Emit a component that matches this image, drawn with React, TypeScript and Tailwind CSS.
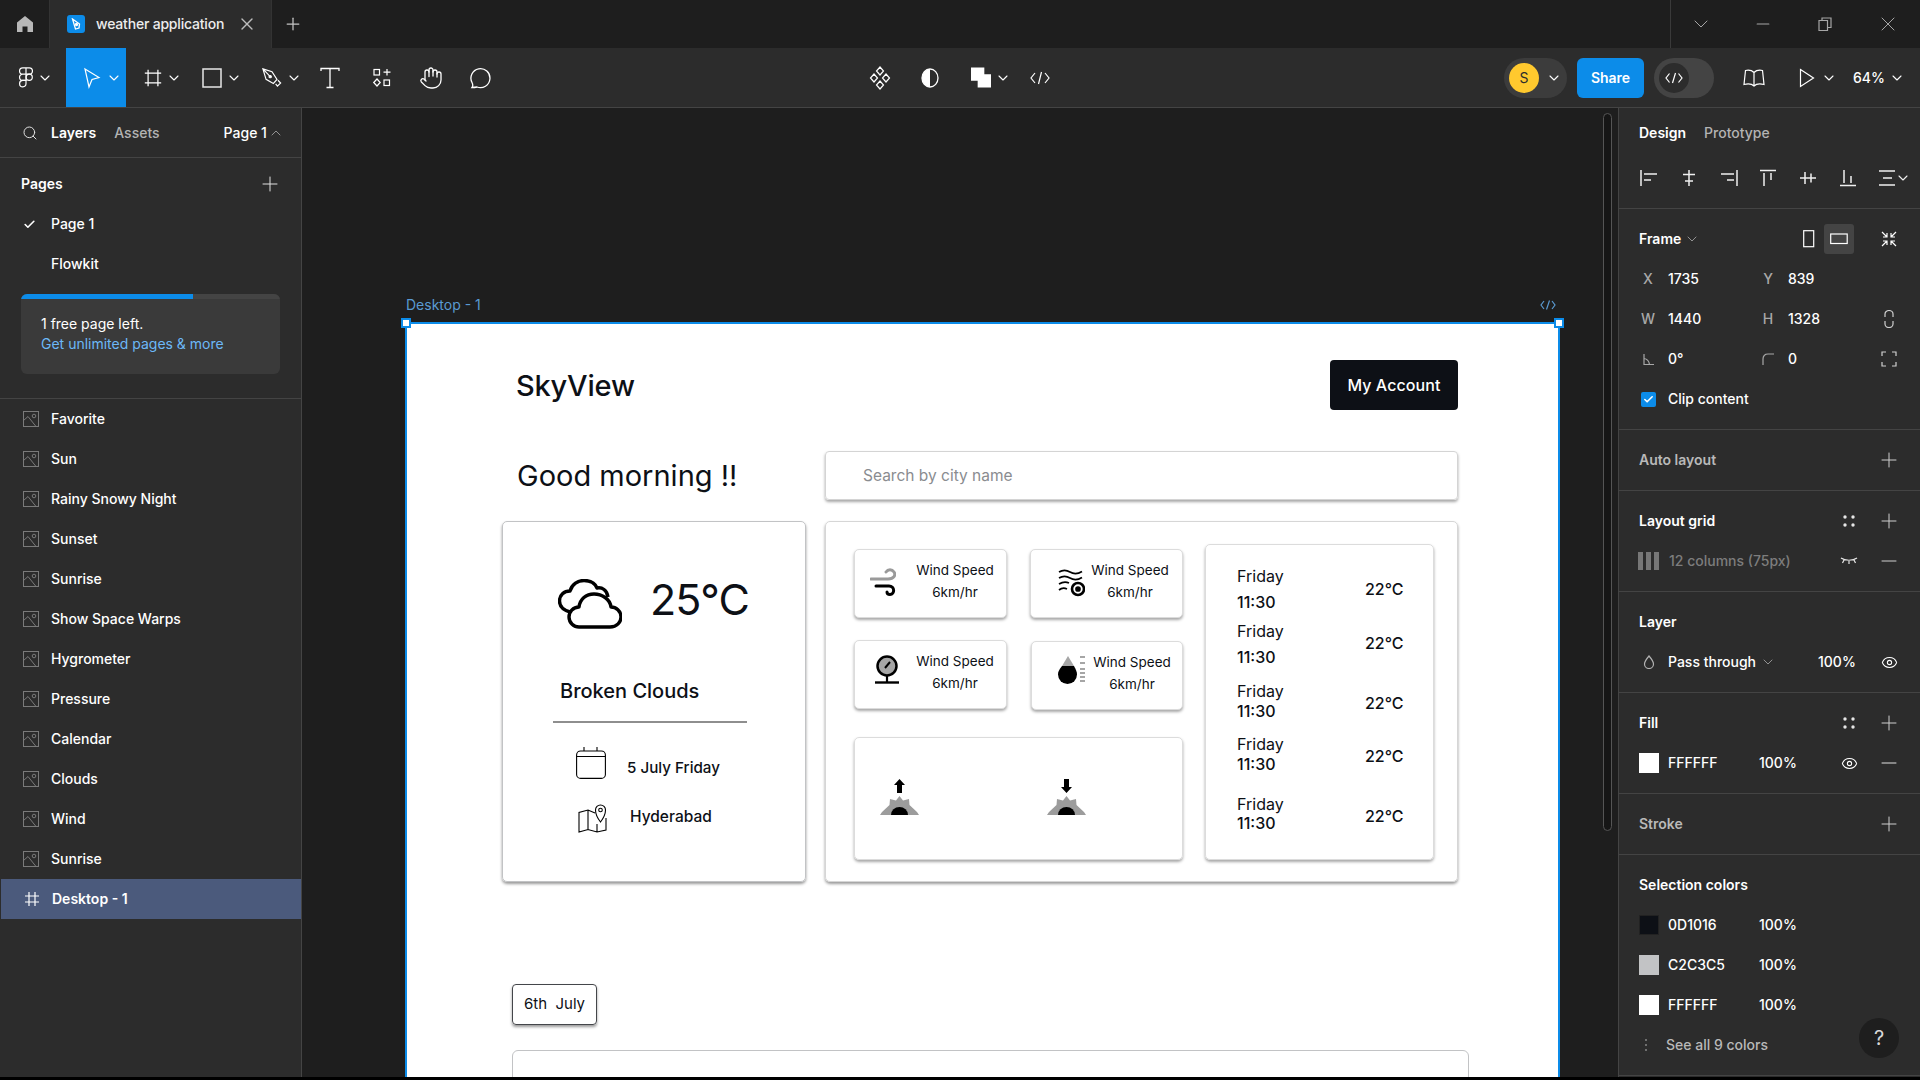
import { Check, ChevronDown, ChevronUp, Eye, Hand, Minus, Plus, Search, X } from "lucide-react";
import type { ReactNode } from "react";

const layers = [
  "Favorite",
  "Sun",
  "Rainy Snowy Night",
  "Sunset",
  "Sunrise",
  "Show Space Warps",
  "Hygrometer",
  "Pressure",
  "Calendar",
  "Clouds",
  "Wind",
  "Sunrise",
];

// every row in the forecast list sits a little differently in the design file
const forecast = [
  { top: "mt-[21px]", gap: "mt-[6px]", temp: "mb-[1px]" },
  { top: "mt-[9px]", gap: "mt-[6px]", temp: "mb-[2px]" },
  { top: "mt-[14px]", gap: "mt-0", temp: "mt-[4px]" },
  { top: "mt-[13px]", gap: "mt-0", temp: "mt-[4px]" },
  { top: "mt-[20px]", gap: "-mt-px", temp: "mt-[4px]" },
];

function Svg({ w = 20, h = 20, className = "", children }: { w?: number; h?: number; className?: string; children: ReactNode }) {
  return (
    <svg width={w} height={h} viewBox={`0 0 ${w} ${h}`} fill="none" stroke="currentColor" strokeWidth="1.2" className={className}>
      {children}
    </svg>
  );
}

function Chev({ className = "" }: { className?: string }) {
  return <ChevronDown size={16} strokeWidth={1.6} className={`-mx-0.5 shrink-0 ${className}`} />;
}

function Tool({ active, className = "", children }: { active?: boolean; className?: string; children: ReactNode }) {
  return (
    <div className={`flex h-[59px] w-[60px] items-center gap-[6px] pl-4 text-white ${active ? "bg-[#0c8ce9]" : ""} ${className}`}>
      <div className="flex w-5 justify-center">{children}</div>
      <Chev />
    </div>
  );
}

function TitleBar() {
  return (
    <div className="flex h-12 items-center bg-[#1e1e1e] text-[#c4c4c4]">
      <div className="flex h-12 w-[50px] items-center justify-center border-r border-[#333]">
        <svg width="16" height="16" viewBox="0 0 16 16" fill="#b8b8b8">
          <path d="M8 0 16 6.5V16H10.5V10.5H5.5V16H0V6.5Z" />
        </svg>
      </div>
      <div className="flex h-12 w-[222px] items-center border-r border-[#333] bg-[#2c2c2c] pl-[17px]">
        <div className="flex h-[18px] w-[18px] items-center justify-center rounded-[3px] bg-[#0c8ce9]">
          <svg width="10" height="12" viewBox="0 0 10 12" fill="none" stroke="#fff" strokeWidth="1.3">
            <path d="M1.5 1 8.5 6 8 10 4.5 11 1.5 1Z" />
            <circle cx="5.5" cy="6.5" r="1" fill="#fff" />
          </svg>
        </div>
        <span className="ml-[11px] w-[141px] text-sm font-medium tracking-[-0.2px] whitespace-nowrap text-[#ececec]">weather application</span>
        <X size={20} strokeWidth={1.6} className="text-[#bdbdbd]" />
      </div>
      <Plus size={20} strokeWidth={1.5} className="ml-[11px] text-[#c4c4c4]" />
      <div className="ml-[1367px] flex h-12 flex-1 items-center border-l border-[#3a3a3a] text-[#a6a6a6]">
        <ChevronDown size={24} strokeWidth={1} className="ml-[18px]" />
        <Minus size={20} strokeWidth={1.4} className="ml-[40px]" />
        <Svg w={14} h={14} className="ml-[45px]">
          <path d="M1 3.5H9.5V13.5H1ZM4 3.5V1H13V10.5H9.5" />
        </Svg>
        <X size={24} strokeWidth={1} className="ml-[44px]" />
      </div>
    </div>
  );
}

function Toolbar() {
  return (
    <div className="flex h-[60px] items-start border-b border-[#444] bg-[#2c2c2c] text-white">
      <div className="flex h-[59px] w-[66px] items-center gap-[3px] pl-4">
        <div className="flex w-5 justify-center">
          <svg width="14" height="21" viewBox="0 0 14 21" fill="none" stroke="#fff" strokeWidth="1.2">
            <path d="M7 .8H3.7a3.1 3.1 0 0 0 0 6.3H7ZM7 .8h3.3a3.1 3.1 0 0 1 0 6.3H7ZM7 7.1H3.7a3.1 3.1 0 0 0 0 6.3H7Z" />
            <circle cx="10.2" cy="10.3" r="3.1" />
            <path d="M7 13.4H3.7a3.2 3.2 0 1 0 3.3 3.2Z" />
          </svg>
        </div>
        <Chev />
      </div>
      <Tool active>
        <svg width="18" height="22" viewBox="0 0 18 22" fill="none" stroke="#fff" strokeWidth="1.2">
          <path d="M2 2 16 10.5 9 12.5 6 20Z" />
        </svg>
      </Tool>
      <Tool>
        <Svg w={22} h={22} className="ml-[2px]">
          <path d="M5 1V21M17 1V21M1 5H21M1 17H21" strokeWidth="1.5" />
        </Svg>
      </Tool>
      <Tool>
        <Svg w={20} h={20}>
          <rect x="1" y="1" width="18" height="18" strokeWidth="1.5" stroke="#e6e6e6" />
        </Svg>
      </Tool>
      <Tool>
        <Svg w={22} h={22}>
          <path d="M1 1 11 4 16.5 12.5 12.5 17 4.5 12.5ZM1 1 8.5 9M15 17.5 17 20 20.5 16.5 17.5 13.5" strokeWidth="1.3" />
          <circle cx="9" cy="9.5" r="1.3" fill="currentColor" />
        </Svg>
      </Tool>
      <div className="flex h-[59px] w-12 items-center justify-center">
        <Svg w={20} h={22}>
          <path d="M1 4V1.5H19V4M10 1.5V20.5M6.5 20.5H13.5" strokeWidth="1.3" />
        </Svg>
      </div>
      <div className="flex h-[59px] w-14 items-center justify-center">
        <Svg w={20} h={20}>
          <rect x="2" y="1.5" width="5.5" height="5.5" />
          <path d="M15 1V7.5M11.5 4.2H18.5M5 11 8.2 14.5 5 18 1.7 14.5Z" />
          <rect x="12" y="12" width="5.5" height="5.5" />
        </Svg>
      </div>
      <div className="flex h-[59px] w-[42px] items-center justify-center">
        <Hand size={24} strokeWidth={1.3} />
      </div>
      <div className="flex h-[59px] w-14 items-center justify-center">
        <Svg w={22} h={22}>
          <path d="M3 20.5C4.5 18.5 4 17.5 3 15.5A9.5 9.5 0 1 1 8 20C6 20.5 4.5 20.5 3 20.5Z" strokeWidth="1.3" />
        </Svg>
      </div>

      <div className="ml-[347px] flex h-[59px] w-[50px] items-center justify-center">
        <Svg w={22} h={24}>
          <path d="M11 1 14.5 5 11 9 7.500 5ZM5 8 8.500 12 5 16 1.500 12ZM17 8 20.500 12 17 16 13.500 12ZM11 15 14.500 19 11 23 7.500 19Z" />
        </Svg>
      </div>
      <div className="flex h-[59px] w-[50px] items-center justify-center">
        <svg width="20" height="20" viewBox="0 0 20 20" fill="none">
          <path d="M10 1A8 9 0 0 0 10 19Z" fill="#fff" />
          <ellipse cx="10" cy="10" rx="8" ry="9" stroke="#fff" strokeWidth="1.3" />
        </svg>
      </div>
      <Tool>
        <svg width="21" height="21" viewBox="0 0 21 21" fill="#fff">
          <path d="M0 0H14V7H21V21H7V14H0Z" />
        </svg>
      </Tool>
      <div className="flex h-[59px] w-[50px] items-center justify-center">
        <Svg w={20} h={14}>
          <path d="M5 2 1 7 5 12M15 2 19 7 15 12M11.500 1 8.500 13" />
        </Svg>
      </div>

      <div className="mt-[10px] ml-[439px] flex h-10 w-[63px] items-center rounded-full bg-[#3c3c3c] pl-[5px]">
        <div className="flex h-[30px] w-[30px] items-center justify-center rounded-full bg-[#ffc92e] text-sm text-[#2c2c2c]">S</div>
        <Chev className="ml-[7px]" />
      </div>
      <div className="mt-[10px] ml-[10px] flex h-10 w-[67px] items-center justify-center rounded-md bg-[#0c8ce9] text-sm font-semibold">Share</div>
      <div className="mt-[10px] ml-[10px] flex h-10 w-[60px] items-center rounded-full bg-[#444] pl-[5px]">
        <div className="flex h-[30px] w-[30px] items-center justify-center rounded-full bg-[#2c2c2c]">
          <Svg w={18} h={12}>
            <path d="M4.500 1.500 1 6 4.500 10.500M13.500 1.500 17 6 13.500 10.500M10.500 1 7.500 11" />
          </Svg>
        </div>
      </div>
      <div className="ml-5 flex h-[59px] w-10 items-center justify-center">
        <Svg w={22} h={18}>
          <path d="M11 3.500C9 1.500 5 1 2.500 1.500L1 15.500C5 14.500 9 15 11 17 13 15 17 14.500 21 15.500L19.500 1.500C17 1 13 1.500 11 3.500ZM11 3.500V17" />
        </Svg>
      </div>
      <Tool className="ml-[7px]">
        <svg width="16" height="20" viewBox="0 0 16 20" fill="none" stroke="#fff" strokeWidth="1.2">
          <path d="M1.500 1.500 14.500 10 1.500 18.500Z" />
        </svg>
      </Tool>
      <div className="ml-[12px] flex h-[59px] items-center gap-[6px] text-sm font-medium">
        64%
        <Chev />
      </div>
    </div>
  );
}

function LayerIcon() {
  return (
    <svg width="16" height="16" viewBox="0 0 16 16" fill="none" stroke="#7a7a7a" strokeWidth="1">
      <rect x=".5" y=".5" width="15" height="15" />
      <path d="M.5 9.500 5 5.500 13 15.500" />
      <circle cx="11" cy="5" r="1.800" />
    </svg>
  );
}

function LeftPanel() {
  return (
    <aside className="w-[302px] shrink-0 border-r border-[#444] bg-[#2c2c2c] text-sm text-white">
      <div className="flex h-[50px] items-center border-b border-[#444] pl-[22px]">
        <Search size={16} strokeWidth={1.5} className="text-[#e0e0e0]" />
        <span className="ml-[13px] font-semibold">Layers</span>
        <span className="ml-[18px] font-medium text-[#b3b3b3]">Assets</span>
        <span className="ml-[64px] font-medium">Page 1</span>
        <ChevronUp size={16} strokeWidth={1.4} className="ml-[1px] text-[#9a9a9a]" />
      </div>
      <div className="mt-[6px] flex h-10 items-center justify-between pr-[19px] pl-[21px]">
        <span className="font-semibold">Pages</span>
        <Plus size={24} strokeWidth={1} className="text-[#e0e0e0]" />
      </div>
      <div className="flex h-10 items-center pl-[23px] font-medium">
        <Check size={13} strokeWidth={3} />
        <span className="ml-[15px]">Page 1</span>
      </div>
      <div className="flex h-10 items-center pl-[51px] font-medium">Flowkit</div>
      <div className="mx-[21px] mt-[10px] h-20 overflow-hidden rounded-md bg-[#3a3a3a]">
        <div className="h-[5px] bg-[#444]">
          <div className="h-[5px] w-[172px] bg-[#0c8ce9]" />
        </div>
        <div className="mt-[15px] pl-5 leading-5">1 free page left.</div>
        <div className="pl-5 leading-5 text-[#6cb8f7]">Get unlimited pages &amp; more</div>
      </div>
      <div className="mt-6 border-t border-[#444]">
        {layers.map((name, i) => (
          <div key={i} className="flex h-10 items-center gap-[12px] pl-[23px] font-medium">
            <LayerIcon />
            {name}
          </div>
        ))}
        <div className="ml-px flex h-10 items-center gap-[13px] bg-[#4b5a7c] pl-[24px] font-semibold">
          <Svg w={14} h={14}>
            <path d="M4 0V14M10 0V14M0 4H14M0 10H14" />
          </Svg>
          Desktop - 1
        </div>
      </div>
    </aside>
  );
}

function CloudIcon() {
  return (
    <svg width="64" height="50" viewBox="0 0 64 50" fill="none" stroke="#000" strokeWidth="3.400" strokeLinejoin="round">
      <path d="M21 48H52C59 48 63 43 63 38C63 32 58 28 53 28C52 20 44 15 36 15C28 15 22 20 21 28C15 28 11 33 11 38C11 44 16 48 21 48Z" />
      <path d="M12 33C5 31 1.500 27 1.500 22C1.500 16 6 12 12 12C14 5 20 1.500 26 1.500C32 1.500 37 4 39 9C44 8 49 11 50 18" />
    </svg>
  );
}

function WindIcon() {
  return (
    <svg width="26" height="28" viewBox="0 0 26 28" fill="none" strokeWidth="3" strokeLinecap="round">
      <path d="M1 11H18C24 11 26 7 24 4C22 1 18 1 16 4" stroke="#9a9a9a" />
      <path d="M6 18H19C25 18 25 26.500 20 26.500C18 26.500 17 25.500 17 24" stroke="#000" />
    </svg>
  );
}

function WaveIcon() {
  return (
    <svg width="27" height="28" viewBox="0 0 27 28" fill="none" stroke="#000" strokeWidth="1.700">
      <path d="M1 3C5 .5 8 .5 12 3S20 5 24 2.500M1 9C5 6.500 8 6.500 12 9S20 11 24 8.500M1 15C5 12.500 8 12.500 11 14M1 21C4 18.500 7 19 9 20" />
      <circle cx="20" cy="20" r="6" strokeWidth="2.600" />
      <circle cx="20" cy="20" r="2" fill="#000" />
    </svg>
  );
}

function GaugeIcon() {
  return (
    <svg width="24" height="30" viewBox="0 0 24 30" fill="none" stroke="#000">
      <circle cx="12" cy="11" r="9.500" strokeWidth="2.500" fill="#a6a6a6" />
      <path d="M10 13 15 7" strokeWidth="2" />
      <path d="M12 20V27" strokeWidth="2.200" />
      <path d="M0 27.500H24" strokeWidth="2.400" />
    </svg>
  );
}

function DropIcon() {
  return (
    <svg width="27" height="28" viewBox="0 0 27 28" fill="none">
      <path d="M10 0 4 10H16Z" fill="#a6a6a6" />
      <path d="M4 10C1 13.500 0 16 0 18.500A9.500 9.500 0 0 0 19 18.500C19 16 18 13.500 16 10Z" fill="#000" />
      <path d="M22 1H27M22 7H27M22 13H27M22 17H27M22 21H27M22 25H27" stroke="#a6a6a6" strokeWidth="2" />
    </svg>
  );
}

function SunIcon({ up }: { up?: boolean }) {
  return (
    <svg width="39" height="36" viewBox="0 0 39 36" fill="none">
      <path d="M19.500 17 23 21.500 29 20 29.500 26 37 33 39 36H0L2 33 9.500 26 10 20 16 21.500Z" fill="#9c9c9c" />
      <path d="M11 36A8.500 8 0 0 1 28 36Z" fill="#000" />
      {up ? <path d="M19.500 0 25 6H22V14H17V6H14Z" fill="#000" /> : <path d="M19.500 14 25 8H22V0H17V8H14Z" fill="#000" />}
    </svg>
  );
}

function StatCard({ className, iconBox, icon }: { className: string; iconBox: string; icon: ReactNode }) {
  return (
    <div className={`flex h-[69px] rounded-[5px] border border-[#dcdcdc] bg-white shadow-[0_2px_3px_rgba(0,0,0,0.35)] ${className}`}>
      <div className={`shrink-0 ${iconBox}`}>{icon}</div>
      <div className="w-[84px] pt-[9px] text-center text-[13.5px] leading-[22px] text-[#0d1016]">
        <div className="whitespace-nowrap">Wind Speed</div>
        <div>6km/hr</div>
      </div>
    </div>
  );
}

function Frame() {
  return (
    <div className="relative h-[900px] w-[1155px] border-x-2 border-t-2 border-[#0c8ce9] bg-white text-[#0d1016]">
      <div className="absolute -top-[6px] -left-[6px] h-[10px] w-[10px] border-2 border-[#0c8ce9] bg-white" />
      <div className="absolute -top-[6px] -right-[6px] h-[10px] w-[10px] border-2 border-[#0c8ce9] bg-white" />

      <div className="ml-[95px] w-[956px] pt-[36px]">
        <div className="flex h-[50px] items-center justify-between pl-[14px]">
          <span className="mt-px text-[29px] font-medium tracking-[-0.2px]">SkyView</span>
          <div className="flex h-[50px] w-32 items-center justify-center rounded-[4px] bg-[#0d1016] text-base font-medium tracking-[0.1px] text-white">My Account</div>
        </div>

        <div className="mt-[41px] flex h-[49px] items-center">
          <div className="w-[323px] pl-[15px] text-[29px] whitespace-nowrap">Good morning !!</div>
          <div className="flex h-[49px] w-[633px] items-center rounded-[4px] border border-[#d4d4d4] pl-[37px] text-[15.5px] text-[#8a8c90] shadow-[0_2px_3px_rgba(0,0,0,0.35)]">
            Search by city name
          </div>
        </div>

        <div className="mt-[21px] flex items-start gap-[19px]">
          <div className="h-[361px] w-[304px] rounded-[5px] border border-[#c2c3c5] shadow-[0_2px_3px_rgba(0,0,0,0.4)]">
            <div className="mt-[56px] flex h-[52px] items-center pl-[55px]">
              <CloudIcon />
              <span className="mb-[10px] ml-[28px] text-[43px] leading-none tracking-[-1px]">25°C</span>
            </div>
            <div className="mt-[47px] ml-[57px] h-7 text-xl leading-7 font-medium">Broken Clouds</div>
            <div className="mt-4 ml-[50px] h-[2px] w-[194px] bg-[#8e8e8e]" />
            <div className="mt-[24px] flex h-8 pl-[73px]">
              <svg width="30" height="32" viewBox="0 0 30 32" fill="none" stroke="#000" strokeWidth="1.100">
                <rect x=".6" y="4" width="28.800" height="27.400" rx="4" />
                <path d="M.6 9.500H29.400M8 0V4M21 0V4" />
              </svg>
              <span className="mt-[9px] ml-[21px] text-[15.2px] leading-6 font-medium">5 July Friday</span>
            </div>
            <div className="mt-[25px] flex h-[29px] pl-[75px]">
              <svg width="29" height="29" viewBox="0 0 29 29" fill="none" stroke="#000" strokeWidth="1.100">
                <path d="M17 9 10 6 1 8.500V28L10 25.500 19 28 28 26V14M10 6V25.500M19 20V28" />
                <path d="M22.500 18C19 13.500 17.500 10.500 17.500 6A5 5 0 0 1 27.500 6C27.500 10.500 26 13.500 22.500 18Z" />
                <circle cx="22.500" cy="6" r="1.800" />
              </svg>
              <span className="mt-px ml-[23px] text-[15.5px] leading-6 font-medium">Hyderabad</span>
            </div>
          </div>

          <div className="flex h-[361px] w-[633px] items-start rounded-[5px] border border-[#d6d6d6] pt-[22px] pl-[28px] shadow-[0_2px_3px_rgba(0,0,0,0.4)]">
            <div className="mt-[5px] w-[329px]">
              <div className="flex gap-[23px]">
                <StatCard className="w-[153px]" iconBox="w-[58px] pt-[18px] pl-[15px]" icon={<WindIcon />} />
                <StatCard className="w-[153px]" iconBox="w-[57px] pt-[19px] pl-[27px]" icon={<WaveIcon />} />
              </div>
              <div className="mt-[22px] flex gap-[24px]">
                <StatCard className="w-[153px]" iconBox="w-[58px] pt-[14px] pl-[20px]" icon={<GaugeIcon />} />
                <StatCard className="mt-px w-[152px]" iconBox="w-[58px] pt-[14px] pl-[26px]" icon={<DropIcon />} />
              </div>
              <div className="mt-[27px] flex h-[123px] rounded-[5px] border border-[#dcdcdc] pt-[41px] pl-[25px] shadow-[0_2px_3px_rgba(0,0,0,0.35)]">
                <SunIcon up />
                <div className="ml-[128px]">
                  <SunIcon />
                </div>
              </div>
            </div>
            <div className="ml-[22px] h-[316px] w-[229px] rounded-[5px] border border-[#dcdcdc] pl-[31px] text-base text-[#0d1016] shadow-[0_2px_3px_rgba(0,0,0,0.35)]">
              {forecast.map((row, i) => (
                <div key={i} className={`flex items-center ${row.top}`}>
                  <div className="w-[128px] leading-5">
                    <div className="h-5">Friday</div>
                    <div className={`h-5 font-medium ${row.gap}`}>11:30</div>
                  </div>
                  <span className={`font-medium ${row.temp}`}>22°C</span>
                </div>
              ))}
            </div>
          </div>
        </div>

        <div className="mt-[102px] ml-[10px] flex h-[41px] w-[85px] items-center justify-center rounded-[4px] border border-[#44464a] text-[15px] shadow-[0_2px_3px_rgba(0,0,0,0.4)]">
          6th&nbsp; July
        </div>
        <div className="mt-[25px] ml-[10px] h-[100px] w-[957px] rounded-[6px] border border-[#c2c3c5]" />
      </div>
    </div>
  );
}

function Canvas() {
  return (
    <main className="relative w-[1316px] shrink-0 overflow-hidden bg-[#1e1e1e] pt-[189px] pl-[103px]">
      <div className="flex h-4 w-[1155px] items-center justify-between pr-[4px] pl-px text-sm leading-4 text-[#5a9ad2]">
        <span>Desktop - 1</span>
        <Svg w={16} h={10} className="text-[#5a9ad2]">
          <path d="M4 1 1 5 4 9M12 1 15 5 12 9M9.500 .5 6.500 9.500" />
        </Svg>
      </div>
      <div className="mt-[9px]">
        <Frame />
      </div>
      <div className="absolute top-[5px] left-[1301px] h-[718px] w-[9px] rounded-full border border-[#555] bg-[#161616]" />
    </main>
  );
}

function Section({ rows }: { rows: ReactNode }) {
  return <div className="border-b border-[#444] py-[10px]">{rows}</div>;
}

function Row({ children }: { children: ReactNode }) {
  return <div className="flex h-10 items-center pl-5">{children}</div>;
}

function Slot({ children }: { children: ReactNode }) {
  return <div className="flex w-10 shrink-0 items-center justify-center">{children}</div>;
}

function Dots() {
  return (
    <svg width="12" height="12" viewBox="0 0 12 12" fill="#e6e6e6">
      <circle cx="2" cy="2" r="1.700" />
      <circle cx="10" cy="2" r="1.700" />
      <circle cx="2" cy="10" r="1.700" />
      <circle cx="10" cy="10" r="1.700" />
    </svg>
  );
}

function Field({ label, value, icon }: { label?: string; value: string; icon?: ReactNode }) {
  return (
    <div className="flex w-[120px] items-center">
      <div className="flex w-5 justify-center font-medium text-[#a8a8a8]">{label ?? icon}</div>
      <span className="ml-[10px] font-medium">{value}</span>
    </div>
  );
}

function Swatch({ color, value, actions }: { color: string; value: string; actions?: boolean }) {
  return (
    <Row>
      <div className={`h-5 w-5 shrink-0 ${color}`} />
      <span className="ml-[9px] w-[91px] font-medium">{value}</span>
      <span className="w-[70px] font-medium">100%</span>
      {actions && (
        <>
          <Slot>
            <Eye size={17} strokeWidth={1.5} />
          </Slot>
          <Slot>
            <Minus size={24} strokeWidth={1} className="text-[#e0e0e0]" />
          </Slot>
        </>
      )}
    </Row>
  );
}

function Heading({ text, muted, dots }: { text: string; muted?: boolean; dots?: boolean }) {
  return (
    <div className="flex h-10 items-center justify-between pr-[11px] pl-5">
      <span className={`font-semibold ${muted ? "text-[#b9b9b9]" : ""}`}>{text}</span>
      <div className="flex">
        {dots && (
          <Slot>
            <Dots />
          </Slot>
        )}
        <Slot>
          <Plus size={24} strokeWidth={1} className="text-[#cfcfcf]" />
        </Slot>
      </div>
    </div>
  );
}

function RightPanel() {
  return (
    <aside className="relative w-[302px] shrink-0 border-l border-[#444] bg-[#2c2c2c] text-sm text-white">
      <div className="border-b border-[#444] pb-[10px]">
        <div className="flex h-[50px] items-center pl-5">
          <span className="font-semibold">Design</span>
          <span className="ml-[18px] font-medium text-[#b3b3b3]">Prototype</span>
        </div>
        <div className="flex h-10 items-center pl-[21px] text-[#f0f0f0]">
          <Svg w={18} h={18} className="mr-[22px]">
            <path d="M1 1V17M4 5H17M4 11H11" strokeWidth="1.500" />
          </Svg>
          <Svg w={18} h={18} className="mr-[22px]">
            <path d="M9 1V17M3 5.500H15M5 12H13" strokeWidth="1.500" />
          </Svg>
          <Svg w={18} h={18} className="mr-[21px]">
            <path d="M17 1V17M1 5H14M7 11H14" strokeWidth="1.500" />
          </Svg>
          <Svg w={18} h={18} className="mr-[22px]">
            <path d="M1 1.500H17M5 4V17M12 4V11" strokeWidth="1.500" />
          </Svg>
          <Svg w={18} h={18} className="mr-[22px]">
            <path d="M1 9H17M6 3V15M12 4.500V13.500" strokeWidth="1.500" />
          </Svg>
          <Svg w={18} h={18} className="mr-[21px]">
            <path d="M1 16.500H17M5 1V14M12 7V14" strokeWidth="1.500" />
          </Svg>
          <Svg w={18} h={18}>
            <path d="M1 2H17M1 16H17M5 9H14" strokeWidth="1.500" />
          </Svg>
          <Chev className="-ml-[1px]" />
        </div>
      </div>

      <Section
        rows={
          <>
            <div className="flex h-10 items-center pl-5">
              <span className="font-semibold">Frame</span>
              <ChevronDown size={16} strokeWidth={1.4} className="ml-[3px] text-[#9a9a9a]" />
              <div className="ml-[94px] flex w-[30px] justify-center">
                <Svg w={12} h={18}>
                  <rect x=".7" y=".7" width="10" height="16" />
                </Svg>
              </div>
              <div className="flex h-[30px] w-[30px] items-center justify-center rounded-[3px] bg-[#444]">
                <Svg w={18} h={12}>
                  <rect x=".7" y="1" width="16.500" height="9.500" />
                </Svg>
              </div>
              <div className="ml-[25px] flex w-5 justify-center">
                <Svg w={16} h={16}>
                  <path d="M1 1 6 6M6 2V6H2M15 1 10 6M10 2V6H14M1 15 6 10M6 14V10H2M15 15 10 10M10 14V10H14" />
                </Svg>
              </div>
            </div>
            <div className="flex h-10 items-center pl-[19px]">
              <Field label="X" value="1735" />
              <Field label="Y" value="839" />
            </div>
            <div className="flex h-10 items-center pl-[19px]">
              <Field label="W" value="1440" />
              <Field label="H" value="1328" />
              <Svg w={10} h={18} className="ml-[6px] text-[#d0d0d0]">
                <path d="M1 7V4A4 3.500 0 0 1 9 4V7M1 11V14A4 3.500 0 0 0 9 14V11" />
              </Svg>
            </div>
            <div className="flex h-10 items-center pl-[19px]">
              <Field
                value="0°"
                icon={
                  <Svg w={11} h={11} className="text-[#a8a8a8]">
                    <path d="M1 0V10.500H11M1 4.500C4 5 6 7 6.500 10.500" />
                  </Svg>
                }
              />
              <Field
                value="0"
                icon={
                  <Svg w={12} h={12} className="text-[#a8a8a8]">
                    <path d="M1 12V6C1 3 3 1 6 1H12" />
                  </Svg>
                }
              />
              <Svg w={16} h={16} className="ml-[3px] text-[#d0d0d0]">
                <path d="M1 5V1H5M11 1H15V5M15 11V15H11M5 15H1V11" />
              </Svg>
            </div>
            <div className="flex h-10 items-center pl-[22px]">
              <div className="flex h-[15px] w-[15px] items-center justify-center rounded-[2px] bg-[#0c8ce9]">
                <Check size={11} strokeWidth={3.500} />
              </div>
              <span className="ml-[12px] font-medium">Clip content</span>
            </div>
          </>
        }
      />

      <Section rows={<Heading text="Auto layout" muted />} />

      <Section
        rows={
          <>
            <Heading text="Layout grid" dots />
            <div className="flex h-10 items-center justify-between pr-[11px] pl-[19px]">
              <div className="flex items-center">
                <div className="flex gap-[3px]">
                  <div className="h-[18px] w-[5px] bg-[#777]" />
                  <div className="h-[18px] w-[5px] bg-[#777]" />
                  <div className="h-[18px] w-[5px] bg-[#777]" />
                </div>
                <span className="ml-[10px] font-medium text-[#7d7d7d]">12 columns (75px)</span>
              </div>
              <div className="flex">
                <Slot>
                  <Svg w={18} h={8} className="text-[#e6e6e6]">
                    <path d="M1 1C5 4 13 4 17 1M4 3 2.500 6M9 4V7M14 3 15.500 6" />
                  </Svg>
                </Slot>
                <Slot>
                  <Minus size={24} strokeWidth={1} className="text-[#cfcfcf]" />
                </Slot>
              </div>
            </div>
          </>
        }
      />

      <Section
        rows={
          <>
            <div className="flex h-10 items-center pl-5 font-semibold">Layer</div>
            <Row>
              <Svg w={12} h={14} className="ml-[4px] text-[#b3b3b3]">
                <path d="M6 1C3 4.500 1.500 6.500 1.500 9A4.500 4.500 0 0 0 10.500 9C10.500 6.500 9 4.500 6 1Z" />
              </Svg>
              <span className="ml-[13px] font-medium">Pass through</span>
              <ChevronDown size={16} strokeWidth={1.4} className="ml-[4px] text-[#9a9a9a]" />
              <span className="ml-[42px] w-[63px] font-medium">100%</span>
              <Eye size={17} strokeWidth={1.5} />
            </Row>
          </>
        }
      />

      <Section
        rows={
          <>
            <Heading text="Fill" dots />
            <Swatch color="bg-white" value="FFFFFF" actions />
          </>
        }
      />

      <Section rows={<Heading text="Stroke" muted />} />

      <Section
        rows={
          <>
            <div className="flex h-10 items-center pl-5 font-semibold">Selection colors</div>
            <Swatch color="bg-[#0d1016] border border-[#222]" value="0D1016" />
            <Swatch color="bg-[#c2c3c5]" value="C2C3C5" />
            <Swatch color="bg-white" value="FFFFFF" />
            <div className="flex h-10 items-center pl-[26px] font-medium text-[#b9b9b9]">
              <div className="flex flex-col gap-[3px]">
                <div className="h-[2px] w-[2px] bg-[#6f6f6f]" />
                <div className="h-[2px] w-[2px] bg-[#6f6f6f]" />
                <div className="h-[2px] w-[2px] bg-[#6f6f6f]" />
              </div>
              <span className="ml-[19px]">See all 9 colors</span>
            </div>
          </>
        }
      />

      <div className="absolute top-[910px] left-[240px] flex h-10 w-10 items-center justify-center rounded-full bg-[#1e1e1e] text-xl text-[#d8d8d8]">?</div>
    </aside>
  );
}

export default function App() {
  return (
    <div className="flex h-[1080px] w-[1920px] flex-col overflow-hidden bg-black font-[Inter,sans-serif]">
      <TitleBar />
      <Toolbar />
      <div className="flex h-[969px] overflow-hidden">
        <LeftPanel />
        <Canvas />
        <RightPanel />
      </div>
    </div>
  );
}
